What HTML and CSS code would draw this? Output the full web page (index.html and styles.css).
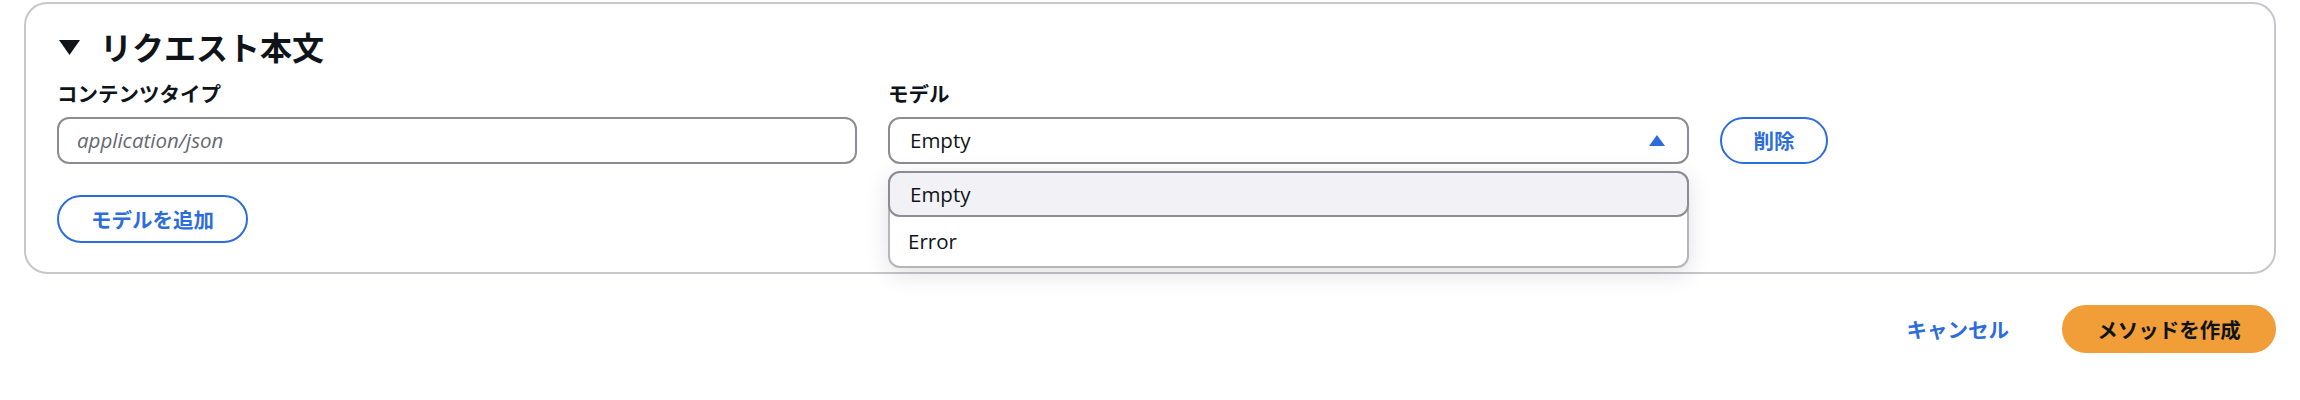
FILE: index.html
```html
<!DOCTYPE html>
<html lang="ja">
<head>
<meta charset="utf-8">
<title>リクエスト本文</title>
<link rel="stylesheet" href="styles.css">
</head>
<body>
<div class="page">
  <section class="card">
    <div class="card-header">
      <svg class="caret" width="21" height="15" viewBox="0 0 21 15" aria-hidden="true"><polygon points="0,0 21,0 10.5,15" fill="#0f141a"/></svg>
      <h2 class="title">リクエスト本文</h2>
    </div>
    <div class="fields">
      <div class="field">
        <label class="label">コンテンツタイプ</label>
        <div class="input"><span class="placeholder">application/json</span></div>
      </div>
      <div class="field">
        <label class="label">モデル</label>
        <div class="select-wrap">
          <div class="select">
            <span class="select-value">Empty</span>
            <svg class="select-caret" width="16" height="11" viewBox="0 0 16 11" aria-hidden="true"><polygon points="8,0 16,11 0,11" fill="#2d6ddb"/></svg>
          </div>
          <div class="dropdown">
            <div class="option option-active">Empty</div>
            <div class="option">Error</div>
          </div>
        </div>
      </div>
      <div class="field field-action">
        <button class="btn btn-normal">削除</button>
      </div>
    </div>
    <div class="add-row">
      <button class="btn btn-normal">モデルを追加</button>
    </div>
  </section>
  <div class="footer">
    <button class="btn btn-link">キャンセル</button>
    <button class="btn btn-primary">メソッドを作成</button>
  </div>
</div>
</body>
</html>
```
FILE: styles.css
```css
* {
  box-sizing: border-box;
}

html, body {
  margin: 0;
  padding: 0;
  background: #ffffff;
}

body {
  font-family: "Open Sans", "Noto Sans CJK JP", sans-serif;
  font-size: 20.5px;
  line-height: 29px;
  color: #0f141a;
}

.page {
  padding: 2px 24px 0 24px;
}

.card {
  border: 2px solid #c6c6cd;
  border-radius: 23px;
  padding: 22px 31px 29px 31px;
  background: #ffffff;
}

.card-header {
  display: flex;
  align-items: center;
  gap: 20px;
  height: 40px;
  padding-left: 2px;
}

.caret {
  display: block;
  margin-top: 2px;
}

.title {
  margin: 0;
  font-size: 32px;
  line-height: 40px;
  font-weight: 700;
  font-family: "Noto Sans CJK JP", sans-serif;
}

.fields {
  display: grid;
  grid-template-columns: 800px 801px auto;
  column-gap: 31px;
  margin-top: 13px;
  align-items: end;
}

.field {
  display: flex;
  flex-direction: column;
  gap: 9px;
}

.label {
  font-family: "Noto Sans CJK JP", sans-serif;
  font-weight: 700;
  font-size: 20.5px;
  line-height: 29px;
}

.input {
  height: 47px;
  border: 2px solid #8c8c94;
  border-radius: 12px;
  padding: 0 18px;
  display: flex;
  align-items: center;
}

.placeholder {
  font-style: italic;
  color: #656871;
}

.select-wrap {
  position: relative;
}

.select {
  height: 47px;
  border: 2px solid #8c8c94;
  border-radius: 12px;
  padding: 0 22px 0 20px;
  display: flex;
  align-items: center;
  justify-content: space-between;
  background: #ffffff;
}

.select-caret {
  display: block;
}

.dropdown {
  position: absolute;
  top: 54px;
  left: 0;
  right: 0;
  border: 2px solid #b4b4bb;
  border-radius: 12px;
  background: #ffffff;
  box-shadow: 0 6px 24px rgba(0, 7, 22, 0.12);
  z-index: 5;
}

.option {
  height: 49px;
  padding: 0 18px;
  display: flex;
  align-items: center;
}

.option-active {
  height: 46px;
  margin: -2px -2px 0 -2px;
  padding: 0 18px 0 20px;
  border: 2px solid #8c8c94;
  border-radius: 12px;
  background: #f1f1f6;
}

.field-action {
  align-self: end;
}

.btn {
  font-family: "Noto Sans CJK JP", sans-serif;
  font-weight: 700;
  font-size: 20.5px;
  line-height: 29px;
  height: 48px;
  border-radius: 24px;
  border: 2px solid transparent;
  padding: 0 32px;
  background: transparent;
  cursor: pointer;
  display: inline-flex;
  align-items: center;
  justify-content: center;
  white-space: nowrap;
}

.btn-normal {
  border-color: #2d6ddb;
  color: #2d6ddb;
  background: #ffffff;
}

.field-action .btn {
  height: 47px;
  width: 108px;
  padding: 0;
}

.add-row {
  margin-top: 31px;
  display: flex;
}

.add-row .btn {
  width: 191px;
  padding: 0;
}

.footer {
  margin-top: 31px;
  display: flex;
  justify-content: flex-end;
  align-items: center;
  gap: 16px;
}

.btn-link {
  color: #2d6ddb;
  padding: 0 35px;
}

.btn-primary {
  background: #f19e38;
  border-color: #f19e38;
  color: #0f141a;
  width: 214px;
  padding: 0;
}
```
